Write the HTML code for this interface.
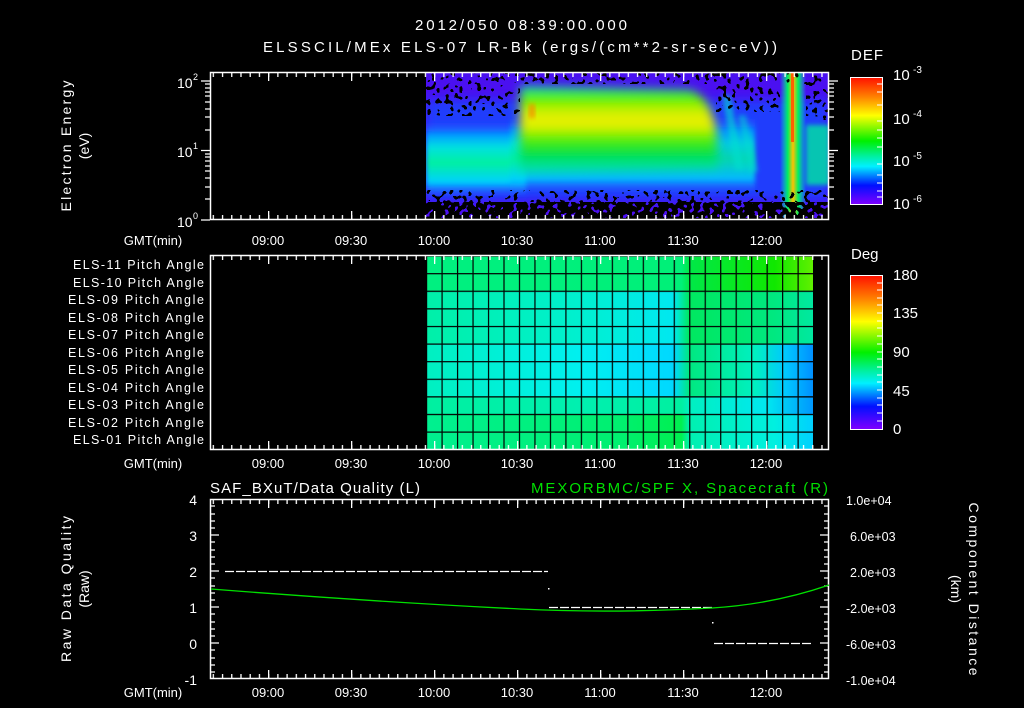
<!DOCTYPE html>
<html><head><meta charset="utf-8"><style>
html,body{margin:0;padding:0;background:#000;}
svg{display:block;}
text{font-family:"Liberation Sans",sans-serif;fill:#fff;}
</style></head><body>
<svg width="1024" height="708" viewBox="0 0 1024 708" xmlns="http://www.w3.org/2000/svg">
<defs>
<linearGradient id="rb" x1="0" y1="0" x2="0" y2="1">
<stop offset="0" stop-color="#ff1000"/><stop offset="0.15" stop-color="#ff8000"/><stop offset="0.3" stop-color="#ffff00"/><stop offset="0.5" stop-color="#00f000"/><stop offset="0.62" stop-color="#00f0a0"/><stop offset="0.7" stop-color="#00f0ff"/><stop offset="0.85" stop-color="#0010ff"/><stop offset="1" stop-color="#8000ff"/>
</linearGradient>
<pattern id="tk" x="268" y="0" width="9.222" height="708" patternUnits="userSpaceOnUse"><rect x="0" y="0" width="1.3" height="708" fill="#fff"/></pattern>
<pattern id="maj" x="268" y="0" width="83" height="708" patternUnits="userSpaceOnUse"><rect x="0" y="0" width="1.3" height="708" fill="#fff"/></pattern>
<linearGradient id="band" x1="0" y1="0" x2="0" y2="1">
<stop offset="0" stop-color="#2040ff" stop-opacity="0"/><stop offset="0.2" stop-color="#00a0ff"/><stop offset="0.35" stop-color="#00e0e0"/><stop offset="0.55" stop-color="#00f0a0"/><stop offset="0.8" stop-color="#00d0ff"/><stop offset="1" stop-color="#2040ff" stop-opacity="0"/>
</linearGradient>
<linearGradient id="blob" x1="0" y1="0" x2="0" y2="1">
<stop offset="0" stop-color="#00e0c0"/><stop offset="0.12" stop-color="#40f000"/><stop offset="0.3" stop-color="#d0f000"/><stop offset="0.45" stop-color="#f0f000"/><stop offset="0.6" stop-color="#60f000"/><stop offset="0.78" stop-color="#00e040"/><stop offset="1" stop-color="#00e0c0"/>
</linearGradient>
<linearGradient id="spk" x1="0" y1="0" x2="1" y2="0">
<stop offset="0" stop-color="#00f0c0" stop-opacity="0"/><stop offset="0.3" stop-color="#00f060"/><stop offset="0.5" stop-color="#ffc000"/><stop offset="0.7" stop-color="#00f060"/><stop offset="1" stop-color="#00f0c0" stop-opacity="0"/>
</linearGradient>
<filter id="nTop" x="0" y="0" width="1" height="1">
<feTurbulence type="fractalNoise" baseFrequency="0.22" numOctaves="1" seed="4"/>
<feColorMatrix type="matrix" values="0 0 0 0 0  0 0 0 0 0  0 0 0 0 0  1 0 0 0 0"/>
<feComponentTransfer><feFuncA type="discrete" tableValues="0 0 0 0 0 0 1 1 1 1"/></feComponentTransfer>
</filter>
<filter id="nMid" x="0" y="0" width="1" height="1">
<feTurbulence type="fractalNoise" baseFrequency="0.22" numOctaves="1" seed="7"/>
<feColorMatrix type="matrix" values="0 0 0 0 0  0 0 0 0 0  0 0 0 0 0  1 0 0 0 0"/>
<feComponentTransfer><feFuncA type="discrete" tableValues="0 0 0 0 0 0 1 1 1 1"/></feComponentTransfer>
</filter>
<filter id="nBot" x="0" y="0" width="1" height="1">
<feTurbulence type="fractalNoise" baseFrequency="0.22" numOctaves="1" seed="9"/>
<feColorMatrix type="matrix" values="0 0 0 0 0  0 0 0 0 0  0 0 0 0 0  1 0 0 0 0"/>
<feComponentTransfer><feFuncA type="discrete" tableValues="0 0 0 0 1 1 1 1 1 1"/></feComponentTransfer>
</filter>
<filter id="bl" x="-20%" y="-30%" width="140%" height="160%"><feGaussianBlur stdDeviation="5"/></filter>
<filter id="bl2" x="-20%" y="-30%" width="140%" height="160%"><feGaussianBlur stdDeviation="2.5"/></filter>
<linearGradient id="rTop" x1="426" x2="813" gradientUnits="userSpaceOnUse">
<stop offset="0" stop-color="#00f080"/><stop offset="0.66" stop-color="#00f078"/><stop offset="0.68" stop-color="#00e848"/><stop offset="0.9" stop-color="#10e800"/><stop offset="1" stop-color="#60f000"/></linearGradient>
<linearGradient id="rMidA" x1="426" x2="813" gradientUnits="userSpaceOnUse">
<stop offset="0" stop-color="#00f0a8"/><stop offset="0.4" stop-color="#00f0d0"/><stop offset="0.64" stop-color="#00e8f0"/><stop offset="0.68" stop-color="#00e860"/><stop offset="0.9" stop-color="#00e880"/><stop offset="1" stop-color="#00e8a0"/></linearGradient>
<linearGradient id="rMid" x1="426" x2="813" gradientUnits="userSpaceOnUse">
<stop offset="0" stop-color="#00f0c0"/><stop offset="0.4" stop-color="#00f0f0"/><stop offset="0.64" stop-color="#00d8ff"/><stop offset="0.68" stop-color="#00e880"/><stop offset="0.85" stop-color="#00f0c0"/><stop offset="0.93" stop-color="#00c8ff"/><stop offset="1" stop-color="#0090ff"/></linearGradient>
<linearGradient id="rLow" x1="426" x2="813" gradientUnits="userSpaceOnUse">
<stop offset="0" stop-color="#00f0a0"/><stop offset="0.4" stop-color="#00f0b0"/><stop offset="0.66" stop-color="#00f0a0"/><stop offset="0.68" stop-color="#00f0c0"/><stop offset="0.88" stop-color="#00e8f0"/><stop offset="1" stop-color="#0098ff"/></linearGradient>
<linearGradient id="rBot" x1="426" x2="813" gradientUnits="userSpaceOnUse">
<stop offset="0" stop-color="#00f090"/><stop offset="0.5" stop-color="#00f070"/><stop offset="0.66" stop-color="#00f050"/><stop offset="0.68" stop-color="#00f0b0"/><stop offset="0.9" stop-color="#00f0e0"/><stop offset="1" stop-color="#00d0ff"/></linearGradient>
<pattern id="grid" x="426" y="255.5" width="15.48" height="17.6" patternUnits="userSpaceOnUse"><rect x="0" y="0" width="1.2" height="17.6" fill="#000"/><rect x="0" y="0" width="15.48" height="1.2" fill="#000"/></pattern>
<clipPath id="c1"><rect x="426" y="72" width="402" height="146"/></clipPath>
</defs>

<text x="521" y="30" font-size="15" text-anchor="middle" textLength="212">2012/050 08:39:00.000</text>
<text x="520" y="52" font-size="15" text-anchor="middle" textLength="514">ELSSCIL/MEx ELS-07 LR-Bk  (ergs/(cm**2-sr-sec-eV))</text>

<g clip-path="url(#c1)">
<rect x="426" y="72" width="402" height="146" fill="#4a10f0"/>
<rect x="426" y="100" width="402" height="100" fill="#1848ff" opacity="0.8" filter="url(#bl)"/>
<rect x="426" y="120" width="100" height="78" fill="url(#band)" filter="url(#bl2)"/>
<rect x="510" y="115" width="245" height="80" fill="url(#band)" opacity="0.85" filter="url(#bl2)"/>
<path d="M520 86 L690 90 Q710 96 716 130 L718 168 L520 172 Z" fill="url(#blob)" filter="url(#bl)"/>
<rect x="529" y="104" width="6" height="14" fill="#ff8000" opacity="0.7" filter="url(#bl2)"/>
<path d="M722 95 L730 95 L745 170 L735 170 Z" fill="#00e0d0" opacity="0.6" filter="url(#bl2)"/>
<path d="M738 115 L746 115 L758 172 L748 172 Z" fill="#00e0d0" opacity="0.5" filter="url(#bl2)"/>
<rect x="780" y="72" width="26" height="150" fill="url(#spk)"/>
<rect x="791" y="72" width="3" height="70" fill="#ff6000"/>
<rect x="806" y="125" width="24" height="60" fill="#00e8a0" opacity="0.8" filter="url(#bl2)"/>
<rect x="426" y="72" width="94" height="44" fill="#000" filter="url(#nTop)"/>
<rect x="520" y="72" width="308" height="12" fill="#000" filter="url(#nTop)"/>
<rect x="716" y="84" width="64" height="28" fill="#000" filter="url(#nTop)"/>
<rect x="806" y="84" width="22" height="36" fill="#000" filter="url(#nTop)"/>
<rect x="426" y="190" width="402" height="12" fill="#000" filter="url(#nMid)"/>
<rect x="426" y="202" width="402" height="16" fill="#000" filter="url(#nBot)"/>
</g>
<rect x="210.5" y="72.5" width="618" height="147" fill="none" stroke="#fff" stroke-width="1.5"/>
<rect x="211" y="73" width="617" height="4" fill="url(#tk)"/>
<rect x="211" y="73" width="617" height="8" fill="url(#maj)"/>
<rect x="211" y="215" width="617" height="4" fill="url(#tk)"/>
<rect x="211" y="211" width="617" height="8" fill="url(#maj)"/>
<g stroke="#fff" stroke-width="1.3">
<path d="M201 81H210M201 150.5H210M201 220H210M205 199H210M205 187H210M205 178H210M205 171H210M205 166H210M205 161H210M205 157H210M205 154H210M205 130H210M205 117H210M205 109H210M205 102H210M205 96H210M205 92H210M205 88H210M205 84H210"/>
<path d="M829 81H838M829 150.5H838M829 199H834M829 187H834M829 178H834M829 171H834M829 166H834M829 161H834M829 157H834M829 154H834M829 130H834M829 117H834M829 109H834M829 102H834M829 96H834M829 92H834M829 88H834M829 84H834"/>
</g>
<text x="177" y="88" font-size="14">10</text><text x="193" y="80" font-size="9">2</text>
<text x="177" y="157" font-size="14">10</text><text x="193" y="149" font-size="9">1</text>
<text x="177" y="227" font-size="14">10</text><text x="193" y="219" font-size="9">0</text>
<text transform="translate(71,146) rotate(-90)" font-size="14" text-anchor="middle" textLength="131">Electron Energy</text>
<text transform="translate(89,146) rotate(-90)" font-size="14" text-anchor="middle">(eV)</text>
<g font-size="13" text-anchor="middle">
<text x="153" y="245">GMT(min)</text>
<text x="268" y="245">09:00</text><text x="351" y="245">09:30</text><text x="434" y="245">10:00</text><text x="517" y="245">10:30</text><text x="600" y="245">11:00</text><text x="683" y="245">11:30</text><text x="766" y="245">12:00</text>
</g>
<text x="851" y="60" font-size="15" textLength="32">DEF</text>
<rect x="850.5" y="77.5" width="32" height="127" fill="url(#rb)" stroke="#fff"/>
<g stroke="#fff"><path d="M877 84H882M877 92H882M877 105H882M877 121H882M877 130H882M877 138H882M877 147H882M877 164H882M877 175H882M877 183H882M877 191H882M877 197H882"/></g>
<g font-size="15"><text x="893" y="80">10</text><text x="913" y="73" font-size="10">-3</text>
<text x="893" y="124">10</text><text x="913" y="117" font-size="10">-4</text>
<text x="893" y="166">10</text><text x="913" y="159" font-size="10">-5</text>
<text x="893" y="209">10</text><text x="913" y="202" font-size="10">-6</text></g>

<rect x="426" y="255.5" width="387" height="35.2" fill="url(#rTop)"/>
<rect x="426" y="290.7" width="387" height="17.6" fill="url(#rMidA)"/>
<rect x="426" y="308.3" width="387" height="35.2" fill="url(#rMidA)"/>
<rect x="426" y="343.5" width="387" height="52.8" fill="url(#rMid)"/>
<rect x="426" y="396.3" width="387" height="17.6" fill="url(#rLow)"/>
<rect x="426" y="413.9" width="387" height="35.6" fill="url(#rBot)"/>
<rect x="426" y="255.5" width="389" height="194" fill="url(#grid)"/>
<rect x="210.5" y="255.5" width="618" height="194" fill="none" stroke="#fff" stroke-width="1.5"/>
<rect x="211" y="256" width="617" height="4" fill="url(#tk)"/>
<rect x="211" y="256" width="617" height="8" fill="url(#maj)"/>
<rect x="211" y="445" width="617" height="4" fill="url(#tk)"/>
<rect x="211" y="441" width="617" height="8" fill="url(#maj)"/>
<g font-size="12.5" text-anchor="end">
<text x="204" y="269" textLength="131">ELS-11 Pitch Angle</text>
<text x="204" y="287" textLength="131">ELS-10 Pitch Angle</text>
<text x="204" y="304" textLength="136">ELS-09 Pitch Angle</text>
<text x="204" y="322" textLength="136">ELS-08 Pitch Angle</text>
<text x="204" y="339" textLength="136">ELS-07 Pitch Angle</text>
<text x="204" y="357" textLength="136">ELS-06 Pitch Angle</text>
<text x="204" y="374" textLength="136">ELS-05 Pitch Angle</text>
<text x="204" y="392" textLength="136">ELS-04 Pitch Angle</text>
<text x="204" y="409" textLength="136">ELS-03 Pitch Angle</text>
<text x="204" y="427" textLength="136">ELS-02 Pitch Angle</text>
<text x="204" y="444" textLength="131">ELS-01 Pitch Angle</text>
</g>
<g font-size="13" text-anchor="middle">
<text x="153" y="468">GMT(min)</text>
<text x="268" y="468">09:00</text><text x="351" y="468">09:30</text><text x="434" y="468">10:00</text><text x="517" y="468">10:30</text><text x="600" y="468">11:00</text><text x="683" y="468">11:30</text><text x="766" y="468">12:00</text>
</g>
<text x="851" y="259" font-size="15">Deg</text>
<rect x="850.5" y="275.5" width="32" height="154" fill="url(#rb)" stroke="#fff"/>
<g stroke="#fff"><path d="M877 283H882M877 290H882M877 298H882M877 305H882M877 313H882M877 321H882M877 328H882M877 336H882M877 344H882M877 352H882M877 359H882M877 367H882M877 375H882M877 382H882M877 390H882M877 398H882M877 405H882M877 413H882M877 421H882"/></g>
<g font-size="15"><text x="893" y="280">180</text><text x="893" y="318">135</text><text x="893" y="357">90</text><text x="893" y="396">45</text><text x="893" y="434">0</text></g>

<text x="210" y="493" font-size="15" textLength="210">SAF_BXuT/Data Quality (L)</text>
<text x="828" y="493" font-size="15" text-anchor="end" textLength="297" style="fill:#00e000">MEXORBMC/SPF X, Spacecraft (R)</text>
<rect x="210.5" y="499.5" width="618" height="179" fill="none" stroke="#fff" stroke-width="1.5"/>
<rect x="211" y="500" width="617" height="4" fill="url(#tk)"/>
<rect x="211" y="500" width="617" height="8" fill="url(#maj)"/>
<rect x="211" y="674" width="617" height="4" fill="url(#tk)"/>
<rect x="211" y="670" width="617" height="8" fill="url(#maj)"/>
<g stroke="#fff" stroke-width="1.2">
<path d="M211 535H219M211 571H219M211 607H219M211 643H219M211 506H215M211 514H215M211 521H215M211 528H215M211 542H215M211 550H215M211 557H215M211 564H215M211 578H215M211 586H215M211 593H215M211 600H215M211 614H215M211 622H215M211 629H215M211 636H215M211 650H215M211 658H215M211 665H215M211 672H215"/>
<path d="M828 535H820M828 571H820M828 607H820M828 643H820M828 506H824M828 514H824M828 521H824M828 528H824M828 542H824M828 550H824M828 557H824M828 564H824M828 578H824M828 586H824M828 593H824M828 600H824M828 614H824M828 622H824M828 629H824M828 636H824M828 650H824M828 658H824M828 665H824M828 672H824"/>
</g>
<g stroke="#fff" stroke-width="1.3" stroke-dasharray="9,2">
<path d="M225 571.5H548M549 607.5H712M714 643.5H812"/>
</g>
<rect x="548" y="588" width="1.5" height="1.5" fill="#fff"/><rect x="712" y="622" width="1.5" height="1.5" fill="#fff"/>
<path d="M211 589 C300 596 420 604 520 609 C580 612 640 612 712 608 C760 605 800 595 829 585" fill="none" stroke="#00e000" stroke-width="1.3"/>
<g font-size="14" text-anchor="end"><text x="197" y="505">4</text><text x="197" y="541">3</text><text x="197" y="577">2</text><text x="197" y="613">1</text><text x="197" y="649">0</text><text x="197" y="685">-1</text></g>
<g font-size="12.5"><text x="846" y="505">1.0e+04</text><text x="850" y="541">6.0e+03</text><text x="850" y="577">2.0e+03</text><text x="846" y="613">-2.0e+03</text><text x="846" y="649">-6.0e+03</text><text x="846" y="685">-1.0e+04</text></g>
<text transform="translate(71,589) rotate(-90)" font-size="14" text-anchor="middle" textLength="146">Raw Data Quality</text>
<text transform="translate(89,589) rotate(-90)" font-size="14" text-anchor="middle">(Raw)</text>
<text transform="translate(969,589) rotate(90)" font-size="14" text-anchor="middle" textLength="173">Component Distance</text>
<text transform="translate(951,589) rotate(90)" font-size="14" text-anchor="middle">(km)</text>
<g font-size="13" text-anchor="middle">
<text x="153" y="697">GMT(min)</text>
<text x="268" y="697">09:00</text><text x="351" y="697">09:30</text><text x="434" y="697">10:00</text><text x="517" y="697">10:30</text><text x="600" y="697">11:00</text><text x="683" y="697">11:30</text><text x="766" y="697">12:00</text>
</g>
</svg>
</body></html>
